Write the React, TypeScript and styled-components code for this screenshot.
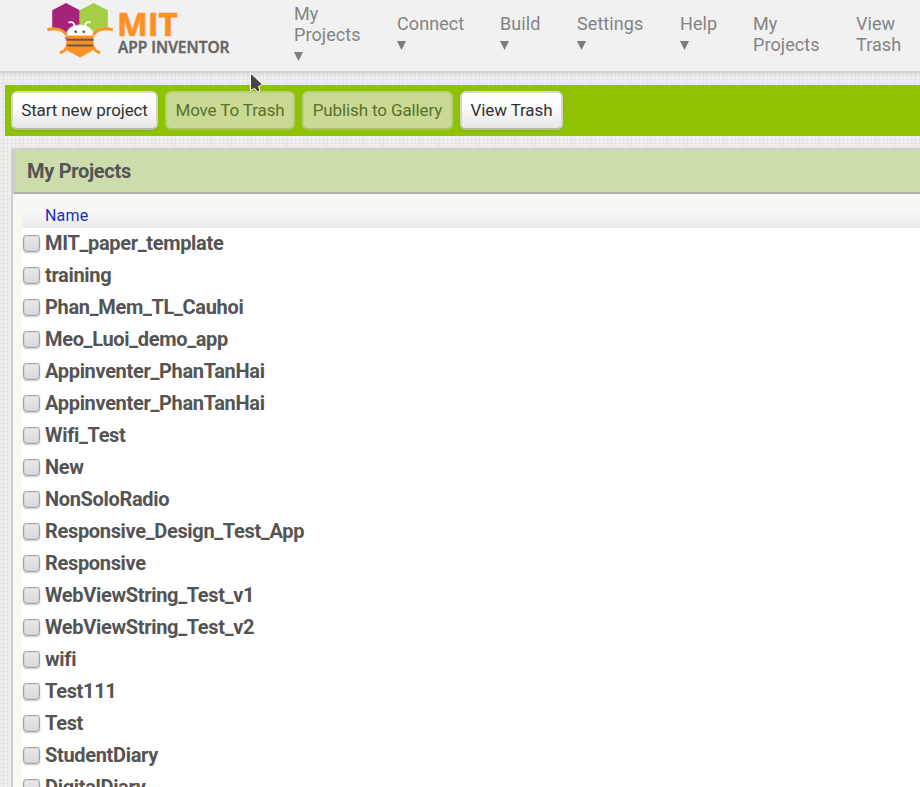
import React from 'react';
import styled, { createGlobalStyle } from 'styled-components';

const GlobalStyle = createGlobalStyle`
  * { box-sizing: border-box; }
  html, body { margin: 0; overflow: hidden; }
  body {
    font-family: Roboto, sans-serif;
    background-color: #e1e1df;
    background-image:
      repeating-linear-gradient(90deg, rgba(255,255,255,.28) 0 3px, transparent 3px 4px),
      repeating-linear-gradient(0deg, rgba(255,255,255,.28) 0 3px, transparent 3px 4px),
      repeating-linear-gradient(90deg, rgba(0,0,0,.015) 0 5px, transparent 5px 19px);
  }
`;

const Page = styled.div`
  position: relative;
  width: 920px;
  height: 787px;
  overflow: hidden;
`;

const Header = styled.header`
  display: flex;
  height: 73px;
  background: #f1f1f1;
  border-bottom: 2px solid #d2d4d1;
  box-shadow: 0 1px 4px rgba(0, 0, 0, 0.1);
`;

const LogoArea = styled.div`
  width: 294px;
  flex: none;
  padding-left: 44px;
`;

const LogoSvg = styled.svg`
  display: block;
  overflow: visible;
`;

const Nav = styled.nav`
  display: flex;
  align-items: center;
  height: 68px;
`;

const NavItem = styled.div<{ $w: number }>`
  flex: none;
  width: ${(p) => p.$w}px;
  font-size: 18px;
  line-height: 21px;
  letter-spacing: 0.08px;
  color: #848484;
  white-space: nowrap;
`;

const Arrow = styled.svg`
  display: block;
  width: 9px;
  height: 21px;
`;

const Toolbar = styled.div`
  display: flex;
  align-items: flex-start;
  height: 51px;
  margin: 12px 0 0 5px;
  padding: 6px;
  gap: 7px;
  background: #8fc202;
`;

const Button = styled.button<{ $w: number }>`
  flex: none;
  width: ${(p) => p.$w}px;
  height: 39px;
  padding: 0 0 1px;
  border: 2px solid;
  border-color: #d5d9d3 #d0d3ce #b4b8b1;
  border-radius: 6px;
  background: linear-gradient(#ffffff, #fbfbfb 45%, #e6e6e6);
  color: #333;
  font: 17px/20px Roboto, sans-serif;
  letter-spacing: -0.12px;
  white-space: nowrap;
  box-shadow: 0 1px 2px rgba(0, 0, 0, 0.08);
  &:disabled {
    border-color: #b6cf79 #b5cd79 #a9c366;
    background: #c8da94;
    color: #5b712b;
    box-shadow: none;
  }
`;

const Panel = styled.section`
  height: 660px;
  margin: 12px 0 0 11px;
  border-top: 2px solid #d0d0d0;
  border-left: 2px solid #cecece;
  background: #f8f9f3;
`;

const PanelTitle = styled.h1`
  height: 44px;
  margin: 0;
  padding: 0 0 0 12px;
  border-left: 2px solid #c9cec0;
  border-bottom: 2px solid #b1b1af;
  background: #ccdcaa;
  color: #555;
  font-size: 20px;
  font-weight: 700;
  line-height: 42px;
  letter-spacing: -0.3px;
`;

const Table = styled.div`
  margin: 9px 0 0 9px;
  background: #fff;
`;

const TableHead = styled.div`
  height: 25px;
  padding: 0 0 0 23px;
  background: linear-gradient(#f8f9f4, #f8f8f8 35%, #ebebeb);
  color: #1a2fc0;
  font-size: 16px;
  line-height: 25px;
  letter-spacing: 0.2px;
`;

const Row = styled.div`
  display: flex;
  align-items: center;
  height: 32px;
`;

const Checkbox = styled.input.attrs({ type: 'checkbox' })`
  appearance: none;
  flex: none;
  width: 17px;
  height: 17px;
  margin: 0 5px 2px 1px;
  border: 1px solid #a0a0a0;
  border-radius: 3.5px;
  background: linear-gradient(#e9e9e9, #d9d9d9);
  box-shadow: 0 1px 2px rgba(0, 0, 0, 0.22), inset 0 0 1px rgba(0, 0, 0, 0.35);
`;

const Name = styled.span`
  color: #545454;
  font-size: 20px;
  font-weight: 700;
  line-height: 30px;
  padding-bottom: 2px;
  letter-spacing: -0.33px;
  white-space: nowrap;
`;

const Cursor = styled.svg`
  position: absolute;
  left: 249px;
  top: 71px;
`;

const Logo = () => (
  <LogoSvg width="190" height="60" viewBox="44 0 190 60" aria-label="MIT App Inventor">
    <path d="M52.2 10.2 66 3 79.7 10.2V31L66 39 52.2 27.5Z" fill="#a7227b" />
    <path d="M79.7 10.2 93.5 3 107.8 10.2V29L94 37 79.7 31Z" fill="#a4cf45" />
    <path d="M48 31.5C54 29 61 31 66 37M112 31.5C106 29 99 31 94 37" fill="none" stroke="#f1f1f1" strokeWidth="5" />
    <path d="M66.3 36C66.3 21.5 93.5 21.5 93.5 36Z" fill="#fff" stroke="#fff" />
    <path d="M68.5 22.5C73 21.5 74.5 23 74.5 27M90.8 22.5C86.5 21.5 85 23 85 27" fill="none" stroke="#fff" strokeWidth="1.8" />
    <path d="M47.3 29.8C55 27.5 63 29 66.8 35.2M112.7 29.8C105 27.5 97 29 93.2 35.2" fill="none" stroke="#ff9025" strokeWidth="2.8" />
    <path d="M66.3 35.5H93.5V50L80 57.5 66.3 50Z" fill="#ff9025" />
    <path d="M66.3 39.8H93.5M66.3 45.4H93.5" stroke="#695840" strokeWidth="2" />
    <path d="M67 46 64.7 50.5 60 53M93 46 95.3 50.5 100 53" fill="none" stroke="#ff9025" strokeWidth="2.7" />
    <circle cx="75.7" cy="31.8" r="1.35" fill="#555" />
    <circle cx="83.7" cy="31.8" r="1.35" fill="#555" />
    <text x="117" y="35.5" textLength="60.5" lengthAdjust="spacingAndGlyphs" fontFamily="Open Sans, sans-serif" fontWeight="700" fontSize="32.5" fill="#ff9025" stroke="#ff9025" strokeWidth=".7">MIT</text>
    <text x="118" y="53.3" textLength="111.5" lengthAdjust="spacingAndGlyphs" fontFamily="Open Sans, sans-serif" fontWeight="600" fontSize="16.7" fill="#666" stroke="#666" strokeWidth=".5">APP INVENTOR</text>
  </LogoSvg>
);

const navItems = [
  { lines: ['My', 'Projects'], width: 103, menu: true },
  { lines: ['Connect'], width: 103, menu: true },
  { lines: ['Build'], width: 77, menu: true },
  { lines: ['Settings'], width: 103, menu: true },
  { lines: ['Help'], width: 73, menu: true },
  { lines: ['My', 'Projects'], width: 103, menu: false },
  { lines: ['View', 'Trash'], width: 64, menu: false },
];

const actions = [
  { label: 'Start new project', width: 147, disabled: false },
  { label: 'Move To Trash', width: 130, disabled: true },
  { label: 'Publish to Gallery', width: 151, disabled: true },
  { label: 'View Trash', width: 103, disabled: false },
];

const projects = [
  'MIT_paper_template', 'training', 'Phan_Mem_TL_Cauhoi', 'Meo_Luoi_demo_app',
  'Appinventer_PhanTanHai', 'Appinventer_PhanTanHai', 'Wifi_Test', 'New', 'NonSoloRadio',
  'Responsive_Design_Test_App', 'Responsive', 'WebViewString_Test_v1',
  'WebViewString_Test_v2', 'wifi', 'Test111', 'Test', 'StudentDiary', 'DigitalDiary',
];

export default function App() {
  return (
    <Page>
      <GlobalStyle />
      <Header>
        <LogoArea><Logo /></LogoArea>
        <Nav>
          {navItems.map((item, i) => (
            <NavItem key={i} $w={item.width}>
              {item.lines.map((line) => <div key={line}>{line}</div>)}
              {item.menu && <Arrow viewBox="0 0 9 21"><path d="M0 7H9L4.5 16Z" fill="#7c7c7c" /></Arrow>}
            </NavItem>
          ))}
        </Nav>
      </Header>
      <Toolbar>
        {actions.map((a) => <Button key={a.label} $w={a.width} disabled={a.disabled}>{a.label}</Button>)}
      </Toolbar>
      <Panel>
        <PanelTitle>My Projects</PanelTitle>
        <Table>
          <TableHead>Name</TableHead>
          {projects.map((name, i) => (
            <Row key={i}><Checkbox aria-label={name} /><Name>{name}</Name></Row>
          ))}
        </Table>
      </Panel>
      <Cursor width="16" height="24" viewBox="0 0 16 24">
        <path d="M1.5 2V19.5L5.5 17.3 8.5 21 11 19.5 9.5 15.5 13.5 13.5Z" fill="#454545" stroke="#fff" strokeWidth="1" />
      </Cursor>
    </Page>
  );
}
